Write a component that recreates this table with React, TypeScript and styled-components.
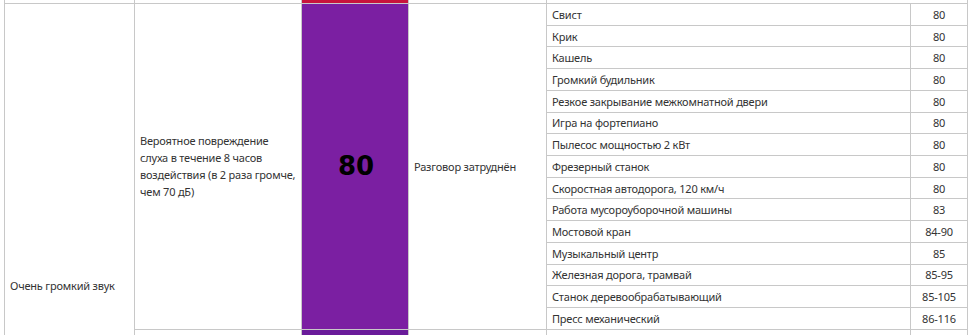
import React from "react";
import styled, { createGlobalStyle } from "styled-components";

const Global = createGlobalStyle`
  html, body { margin: 0; padding: 0; background: #fff; }
  body {
    font-family: "Noto Sans", "Open Sans", sans-serif;
    font-size: 11px;
    letter-spacing: -0.2px;
    color: #333;
  }
`;

const Page = styled.div`
  padding-left: 4px;
`;

const Table = styled.table`
  border-collapse: collapse;
  table-layout: fixed;
  width: 963px;
`;

const TopRow = styled.tr`
  & > td {
    border-top: none;
    height: 3px;
    padding: 0;
  }
`;

const Cell = styled.td<{ $tone?: string }>`
  border: 1px solid #c8c8c8;
  padding: 0 3px 0 5px;
  vertical-align: middle;
  background: ${(p) => p.$tone ?? "transparent"};
  line-height: 17px;
`;

const ListCell = styled.td`
  border: 1px solid #c8c8c8;
  padding: 0;
  vertical-align: top;
`;

const BigValue = styled.div`
  font-family: "DejaVu Sans", Verdana, sans-serif;
  font-weight: bold;
  font-size: 26px;
  letter-spacing: 0;
  color: #000;
  text-align: center;
`;

const SourceRow = styled.div`
  display: grid;
  grid-template-columns: 1fr 56px;
  height: 21.73px;
  box-sizing: border-box;
  border-bottom: 1px solid #c8c8c8;
  &:last-child {
    border-bottom: none;
    height: 20.73px;
  }
`;

const SourceName = styled.div`
  display: flex;
  align-items: center;
  padding-left: 5px;
  border-right: 1px solid #c8c8c8;
  white-space: nowrap;
  overflow: hidden;
`;

const SourceValue = styled.div`
  display: flex;
  align-items: center;
  justify-content: center;
`;

type Source = [string, string];

const loud: Source[] = [
  ["Свист", "80"],
  ["Крик", "80"],
  ["Кашель", "80"],
  ["Громкий будильник", "80"],
  ["Резкое закрывание межкомнатной двери", "80"],
  ["Игра на фортепиано", "80"],
  ["Пылесос мощностью 2 кВт", "80"],
  ["Фрезерный станок", "80"],
  ["Скоростная автодорога, 120 км/ч", "80"],
  ["Работа мусороуборочной машины", "83"],
  ["Мостовой кран", "84-90"],
  ["Музыкальный центр", "85"],
  ["Железная дорога, трамвай", "85-95"],
  ["Станок деревообрабатывающий", "85-105"],
  ["Пресс механический", "86-116"],
];

/* the next band of the table lies below the visible frame: only its cell grid shows */
const nextBandRows = 11;

const SourceList = ({ items }: { items: Source[] }) => (
  <>
    {items.map(([name, value]) => (
      <SourceRow key={name}>
        <SourceName>{name}</SourceName>
        <SourceValue>{value}</SourceValue>
      </SourceRow>
    ))}
  </>
);

const EmptyList = ({ count }: { count: number }) => (
  <>
    {Array.from({ length: count }, (_, i) => (
      <SourceRow key={i}>
        <SourceName />
        <SourceValue />
      </SourceRow>
    ))}
  </>
);

export default function App() {
  return (
    <>
      <Global />
      <Page>
        <Table>
          <colgroup>
            <col style={{ width: 130 }} />
            <col style={{ width: 167 }} />
            <col style={{ width: 107 }} />
            <col style={{ width: 138 }} />
            <col style={{ width: 421 }} />
          </colgroup>
          <tbody>
            <TopRow>
              <Cell />
              <Cell />
              <Cell $tone="#c8143c" />
              <Cell />
              <Cell />
            </TopRow>
            <tr>
              <Cell rowSpan={2}>Очень громкий звук</Cell>
              <Cell>
                Вероятное повреждение слуха в течение 8 часов воздействия (в 2
                раза громче, чем 70 дБ)
              </Cell>
              <Cell $tone="#7b1fa2">
                <BigValue>80</BigValue>
              </Cell>
              <Cell>Разговор затруднён</Cell>
              <ListCell>
                <SourceList items={loud} />
              </ListCell>
            </tr>
            <tr>
              <Cell />
              <Cell $tone="#6a1b9a" />
              <Cell />
              <ListCell>
                <EmptyList count={nextBandRows} />
              </ListCell>
            </tr>
          </tbody>
        </Table>
      </Page>
    </>
  );
}
